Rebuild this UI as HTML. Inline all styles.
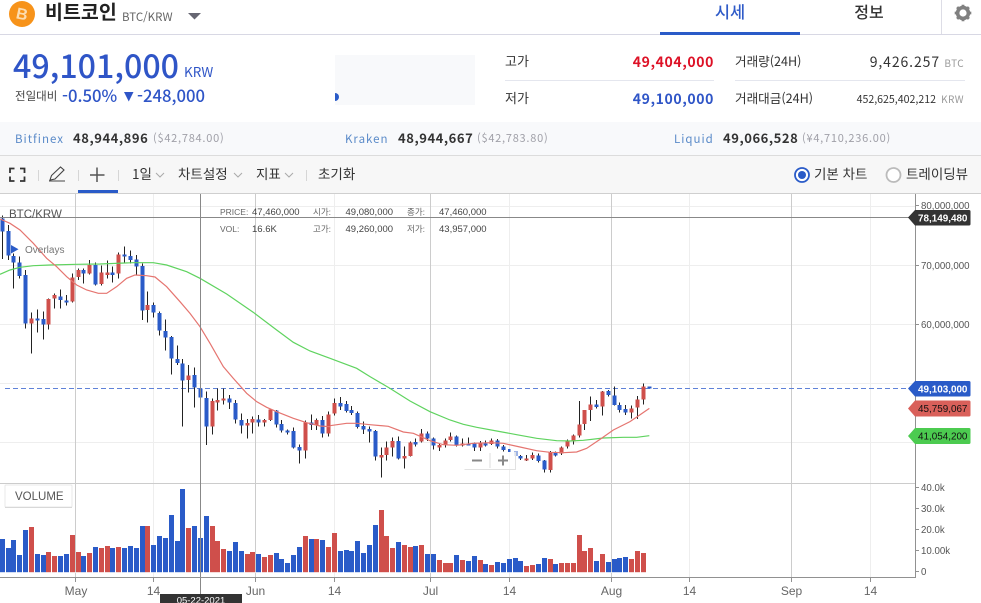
<!DOCTYPE html>
<html lang="ko"><head><meta charset="utf-8"><title>비트코인 BTC/KRW</title>
<style>
html,body{margin:0;padding:0;background:#fff;width:981px;height:603px;overflow:hidden}
svg{display:block}
text{font-family:"Noto Sans CJK KR","Liberation Sans",sans-serif}
.c text,text.c{font-family:"Liberation Sans","Noto Sans CJK KR",sans-serif}
</style></head><body>
<svg width="981" height="603" viewBox="0 0 981 603" xmlns="http://www.w3.org/2000/svg">
<rect width="981" height="603" fill="#fff"/>
<!-- header -->
<circle cx="22" cy="14" r="13" fill="#f7931a"/>
<text class="c" x="22" y="19.500" text-anchor="middle" font-size="16" font-weight="700" fill="#fcdcb0" transform="rotate(12 22 14)">B</text>
<text x="45" y="19" font-size="19.500" font-weight="700" fill="#222">비트코인</text>
<text x="122" y="21" font-size="11.500" fill="#666">BTC/KRW</text>
<path d="M188 13h13l-6.500 6.500z" fill="#666672"/>
<text x="730" y="18" text-anchor="middle" font-size="16.500" font-weight="500" fill="#2f5bc8">시세</text>
<text x="869" y="18" text-anchor="middle" font-size="16" font-weight="500" fill="#333">정보</text>
<path d="M0 34.500H981" stroke="#d8d8e4"/>
<path d="M941.500 0V34" stroke="#dddde6"/>
<rect x="660" y="32" width="140" height="3" fill="#2a5bc8"/>
<circle cx="963" cy="13" r="5.500" fill="none" stroke="#808080" stroke-width="3.400"/>
<path d="M963 4.700V21.300M954.700 13H971.300M957.100 7.100L968.900 18.900M968.900 7.100L957.100 18.900" stroke="#808080" stroke-width="2.800"/>
<circle cx="963" cy="13" r="3.600" fill="#fff"/>
<!-- price -->
<text x="13" y="78" font-size="32.200" font-weight="500" fill="#2f55c7">49,101,000</text>
<text x="184" y="77" font-size="13.500" fill="#2f55c7">KRW</text>
<text x="15" y="100" font-size="11.500" fill="#444">전일대비</text>
<text x="62" y="102" font-size="16.700" font-weight="500" fill="#2f55c7">-0.50%</text>
<path d="M124 92h9.500l-4.750 9.500z" fill="#2f55c7"/>
<text x="137" y="102" font-size="16.700" font-weight="500" fill="#2f55c7">-248,000</text>
<rect x="335" y="55" width="140" height="50" fill="#f8f9fb"/>
<path d="M335 93a4 4 0 0 1 0 8z" fill="#2a5bc8"/>
<!-- stats -->
<text x="505" y="66" font-size="13" fill="#333">고가</text>
<text x="714" y="67" text-anchor="end" font-size="14" font-weight="700" letter-spacing=".6" fill="#dd1126">49,404,000</text>
<path d="M505 80.500H714M735 80.500H965" stroke="#e4e6ee"/>
<text x="505" y="103" font-size="13" fill="#333">저가</text>
<text x="714" y="104" text-anchor="end" font-size="14" font-weight="700" letter-spacing=".6" fill="#2f55c7">49,100,000</text>
<text x="735" y="66" font-size="12.600" fill="#333">거래량(24H)</text>
<text x="940" y="67" text-anchor="end" font-size="14" letter-spacing=".9" fill="#333">9,426.257</text>
<text x="964" y="67" text-anchor="end" font-size="10" letter-spacing=".4" fill="#999">BTC</text>
<text x="735" y="103" font-size="12.600" fill="#333">거래대금(24H)</text>
<text x="936" y="103" text-anchor="end" font-size="10.600" fill="#333">452,625,402,212</text>
<text x="964" y="103" text-anchor="end" font-size="10" letter-spacing=".4" fill="#999">KRW</text>
<!-- exchanges -->
<rect y="122" width="981" height="33" fill="#f8f9fb"/>
<path d="M0 155.500H981" stroke="#dcdcdc"/>
<g font-size="11.500" letter-spacing="1" fill="#5b8bc9">
<text x="15" y="143">Bitfinex</text><text x="345" y="143">Kraken</text><text x="674" y="143">Liquid</text>
</g>
<g font-size="13" font-weight="700" letter-spacing=".55" fill="#333">
<text x="73" y="143">48,944,896</text><text x="398" y="143">48,944,667</text><text x="723" y="143">49,066,528</text>
</g>
<g font-size="11" letter-spacing=".75" fill="#a0a0a8">
<text x="153" y="142">($42,784.00)</text><text x="477" y="142">($42,783.80)</text><text x="802" y="142">(¥4,710,236.00)</text>
</g>
<!-- toolbar -->
<rect y="156" width="981" height="37" fill="#f7f7f7"/>
<path d="M0 193.500H981" stroke="#cfcfcf"/>
<path d="M10 173v-4.500h4.500M20 168.500h4.500V173M24.500 176.500v4.500H20M14.500 181H10v-4.500" fill="none" stroke="#333" stroke-width="1.800"/>
<path d="M38.500 170V181M78.500 170V181M118.500 170V181M306.500 170V181" stroke="#d6d6d6"/>
<path d="M49 181H65M50 180l1.500-4.500 9-8.500 3.500 3-9 9z" fill="none" stroke="#444" stroke-width="1.100"/>
<path d="M90 175H104.500M97 167.500V182" stroke="#555" stroke-width="1.500"/>
<rect x="78" y="190" width="40" height="3" fill="#2a5bc8"/>
<g font-size="13.500" fill="#333">
<text x="132" y="179">1일</text><text x="178" y="179">차트설정</text><text x="256" y="179">지표</text><text x="318" y="179">초기화</text>
<text x="814" y="179">기본 차트</text><text x="906" y="179">트레이딩뷰</text>
</g>
<path d="M156 173l4 4 4-4M234 173l4 4 4-4M285 173l4 4 4-4" fill="none" stroke="#aaa"/>
<circle cx="802" cy="175" r="7" fill="#fff" stroke="#2a5bc8" stroke-width="1.800"/><circle cx="802" cy="175" r="4" fill="#2a5bc8"/>
<circle cx="893.500" cy="175" r="7" fill="#fff" stroke="#bbb" stroke-width="1.800"/>
<!-- grid -->
<path d="M0 206.500H915M0 265.500H915M0 324.500H915M0 383.500H915M0 442.500H915M153.500 194V483M334.500 194V483M509.500 194V483M689.500 194V483M870.500 194V483M153.500 484V577M334.500 484V577M509.500 484V577M689.500 484V577M870.500 484V577" stroke="#eeeeee"/>
<path d="M75.500 194V483M255.500 194V483M430.500 194V483M611.500 194V483M791.500 194V483M75.500 484V577M255.500 484V577M430.500 484V577M611.500 484V577M791.500 484V577" stroke="#cccccc"/>
<path d="M0 483.500H915" stroke="#cccccc"/>
<path d="M5 388.500H915" stroke="#5f82d8" stroke-dasharray="5 3"/>
<!-- candles -->
<g transform="translate(0 195) scale(.33333)" fill="none">
<path shape-rendering="crispEdges" stroke="#222" stroke-width="3" d="M8 62V192M25 90V195M41 175V280M59 185V250M76 225V400M94 352V475M112 344V412M130 350V433M145 310V404M163 296V340M181 283V340M199 300V332M217 236V322M235 220V255M250 220V265M268 195V238M286 202V272M304 212V272M322 197V250M338 215V262M355 172V250M373 155V205M391 167V205M409 180V240M427 205V375M442 290V382M460 322V368M478 350V422M496 373V467M514 423V538M532 452V510M548 492V694M565 510V592M583 518V637M601 578V610M619 590V750M637 610V718M652 580V646M670 580V628M688 600V642M706 615V685M724 655V716M742 672V730M757 665V715M775 660V695M793 672V695M811 640V678M829 645V697M844 675V712M862 703V718M880 698V760M898 748V805M916 677V790M934 658V705M949 670V705M967 663V728M985 650V725"/>
<path shape-rendering="crispEdges" stroke="#2a5bc8" stroke-width="12" d="M8 70V110M25 108V182M41 183V203M59 202V243M76 240V386M112 370V377M130 372V389M181 304V315M199 316V323M250 225V236M286 210V268M338 232V240M373 178V185M391 183V195M409 193V215M427 213V347M460 330V353M478 354V407M496 408V428M514 426V491M532 492V504M548 505V557M583 540V578M601 580V608M619 609V695M688 610V623M706 624V674M724 675V692M775 674V682M829 646V689M844 687V707M862 706V713M880 708V758M898 756V767M934 682V690M967 675V716"/>
<path shape-rendering="crispEdges" stroke="#cf4f4b" stroke-width="12" d="M94 370V386M145 312V389M163 300V311M217 247V320M235 225V246M268 210V236M304 232V267M322 232V240M355 178V236M442 330V345M565 541V555M637 618V695M652 615V623M670 610V617M742 684V692M757 672V683M793 675V683M811 643V675M916 682V767M949 675V690M985 658V716"/>
<polyline stroke="#5fd35f" stroke-width="3.600" points="0,238 30,225 60,217 100,212 150,210 230,208 300,207 400,203 460,203 500,210 560,230 600,250 680,297 760,352 830,405 880,442 930,468 990,490"/>
<polyline stroke="#e57570" stroke-width="3.600" points="0,72 30,85 60,105 100,145 140,190 170,215 200,245 230,270 260,285 295,295 320,295 350,275 380,250 405,240 440,242 465,246 500,275 540,320 570,355 600,395 630,445 670,515 700,550 740,595 770,620 800,637 830,650 880,670 920,683 960,693 990,695"/>
</g>
<g transform="translate(330 195) scale(.33333)" fill="none">
<path shape-rendering="crispEdges" stroke="#222" stroke-width="3" d="M13 610V662M31 606V645M49 618V652M64 633V660M82 650V700M100 680V717M118 695V742M136 705V797M154 757V847M169 740V796M187 728V785M205 725V793M223 755V820M241 740V785M256 730V755M274 702V742M292 710V738M310 728V763M328 745V768M346 730V758M361 713V740M379 722V755M397 730V755M415 727V752M433 742V768M451 738V768M466 737V755M484 730V750M502 732V760M520 750V770M571 780V795M589 780V798M607 772V795M625 775V803M643 795V832M661 768V832M676 770V785M694 755V780M712 733V760M730 718V748M748 618V727M763 645V705M781 605V678M799 615V640M817 588V662M835 585V605M853 575V632M868 622V652M886 630V660M904 632V670M922 603V672M940 565V628"/>
<path shape-rendering="crispEdges" stroke="#2a5bc8" stroke-width="12" d="M31 624V634M49 627V648M64 645V654M82 654V696M100 693V704M118 702V710M136 708V785M205 738V791M256 741V749M292 715V730M310 730V752M379 724V752M415 745V752M433 745V758M466 745V752M502 736V755M520 754V765M571 783V791M625 781V798M643 796V824M676 774V781M799 628V636M835 588V600M853 601V630M868 630V645M886 642V653M958 574V580"/>
<path shape-rendering="crispEdges" stroke="#cf4f4b" stroke-width="12" d="M13 624V655M154 780V788M169 757V780M187 738V758M223 783V791M241 742V783M274 715V740M328 750V757M346 736V750M361 724V735M397 745V752M451 744V758M484 736V747M589 790V796M607 780V791M661 772V825M694 757V776M712 740V755M730 721V739M748 688V722M763 645V687M781 628V645M817 589V635M904 640V653M922 613V638M940 574V614"/>
<polyline stroke="#5fd35f" stroke-width="3.600" points="0,490 40,505 80,520 120,545 180,580 240,618 300,650 360,675 400,688 440,697 500,708 560,719 620,730 680,737 720,738 760,736 820,729 880,727 920,727 958,722"/>
<polyline stroke="#e57570" stroke-width="3.600" points="0,692 50,685 80,685 120,689 175,694 220,711 250,715 300,737 340,749 380,751 430,745 480,743 520,745 570,756 620,767 660,772 700,773 740,771 770,760 810,733 850,705 900,680 958,640"/>
</g>
<!-- faded candles behind zoom control -->
<rect x="508" y="449" width="2.500" height="3" fill="#2a5bc8"/>
<rect x="514" y="451" width="4" height="5" fill="#2a5bc8" fill-opacity=".45"/>
<!-- zoom control -->
<rect x="464.500" y="452" width="51" height="17" rx="1" fill="#fff" fill-opacity=".72"/>
<path d="M464.500 469.500H515.500V452" fill="none" stroke="#e2e2e2"/>
<path d="M490 453V468" stroke="#ddd"/>
<path d="M472 460.500H482M498 460.500H508M503 455.500V465.500" stroke="#888" stroke-width="2"/>
<!-- volume bars -->
<g transform="translate(0 480) scale(.33333)" fill="none" stroke-width="15" shape-rendering="crispEdges">
<path stroke="#2a5bc8" d="M8 177V277M25 204V277M41 180V277M59 225V277M76 150V277M112 222V277M130 225V277M181 228V277M199 222V277M250 228V277M286 201V277M338 204V277M373 204V277M391 198V277M409 204V277M427 138V277M460 195V277M478 168V277M496 174V277M514 105V277M532 183V277M548 27V277M583 138V277M601 174V277M619 108V277M688 213V277M706 186V277M724 213V277M775 222V277M829 219V277M844 237V277M862 249V277M880 225V277M898 201V277M934 177V277M967 180V277"/>
<path stroke="#cf4f4b" d="M94 141V277M145 216V277M163 228V277M217 165V277M235 216V277M268 219V277M304 204V277M322 198V277M355 201V277M442 138V277M565 144V277M637 138V277M652 183V277M670 207V277M742 222V277M757 216V277M793 231V277M811 225V277M916 168V277M949 177V277M985 201V277"/>
</g>
<g transform="translate(330 480) scale(.33333)" fill="none" stroke-width="15" shape-rendering="crispEdges">
<path stroke="#2a5bc8" d="M31 213V277M49 210V277M64 213V277M82 183V277M100 219V277M118 195V277M136 135V277M205 186V277M256 198V277M292 222V277M310 222V277M379 225V277M415 243V277M433 228V277M466 252V277M502 246V277M520 249V277M538 237V277M556 234V277M571 243V277M625 252V277M643 234V277M676 252V277M799 243V277M835 246V277M853 237V277M868 234V277M886 231V277"/>
<path stroke="#cf4f4b" d="M13 159V277M154 90V277M169 168V277M187 204V277M223 195V277M241 201V277M274 195V277M328 240V277M346 249V277M361 249V277M397 240V277M451 240V277M484 255V277M589 258V277M607 255V277M661 237V277M694 249V277M712 249V277M730 249V277M748 165V277M763 213V277M781 204V277M817 222V277M904 237V277M922 213V277M940 219V277"/>
</g>
<path d="M0 572.500H650" stroke="#fff" stroke-opacity=".6"/>
<!-- crosshair -->
<path d="M0 217.500H915M200.500 194V603" stroke="#888"/>
<!-- axes -->
<path d="M0 577.500H916M915.500 194V578" stroke="#919191"/>
<path d="M75.500 578V582M153.500 578V582M255.500 578V582M334.500 578V582M430.500 578V582M509.500 578V582M611.500 578V582M689.500 578V582M791.500 578V582M870.500 578V582M916 205.500H919M916 265.500H919M916 324.500H919M916 487.500H919M916 508.500H919M916 529.500H919M916 550.500H919M916 571.500H919" stroke="#919191"/>
<g class="c" font-size="9.700" fill="#555">
<text x="921" y="209">80,000,000</text><text x="921" y="269">70,000,000</text><text x="921" y="328">60,000,000</text>
<text x="921" y="491">40.0k</text><text x="921" y="512">30.0k</text><text x="921" y="533">20.0k</text><text x="921" y="554">10.00k</text><text x="921" y="575">0</text>
</g>
<g class="c" font-size="12" fill="#666" text-anchor="middle">
<text x="76" y="595">May</text><text x="153.500" y="595">14</text><text x="255.500" y="595">Jun</text><text x="334.500" y="595">14</text><text x="430.500" y="595">Jul</text><text x="509.500" y="595">14</text><text x="611.500" y="595">Aug</text><text x="689.500" y="595">14</text><text x="791.500" y="595">Sep</text><text x="870.500" y="595">14</text>
</g>
<rect x="160" y="594" width="82" height="9" fill="#333"/>
<text class="c" x="201" y="603.500" text-anchor="middle" font-size="9.500" fill="#fff">05-22-2021</text>
<!-- price tags -->
<path d="M908 217.500l7-7.500h54a1.500 1.500 0 0 1 1.500 1.500v12.500a1.500 1.500 0 0 1-1.500 1.500h-54z" fill="#333"/>
<path d="M908 388.500l7-7.500h54a1.500 1.500 0 0 1 1.500 1.500v12.500a1.500 1.500 0 0 1-1.500 1.500h-54z" fill="#2a5bc8"/>
<path d="M908 408.500l7-8h54a1.500 1.500 0 0 1 1.500 1.500v13a1.500 1.500 0 0 1-1.500 1.500h-54z" fill="#d9605a"/>
<path d="M908 436l7-8h54a1.500 1.500 0 0 1 1.500 1.500v13a1.500 1.500 0 0 1-1.500 1.500h-54z" fill="#4ccb50"/>
<g class="c" font-size="9.900">
<text x="918" y="221.500" fill="#fff" font-weight="700">78,149,480</text>
<text x="918" y="392.500" fill="#fff" font-weight="700">49,103,000</text>
<text x="918" y="412" fill="#111">45,759,067</text>
<text x="918" y="439.500" fill="#111">41,054,200</text>
</g>
<!-- legend -->
<text class="c" x="9" y="218" font-size="11.500" fill="#555">BTC/KRW</text>
<path d="M11 245l7.500 4.200-7.500 4.300z" fill="#2a5bc8"/>
<text class="c" x="25" y="253" font-size="10" fill="#777">Overlays</text>
<g font-size="8.500" fill="#666" class="c">
<text x="220" y="215">PRICE:</text><text x="252" y="215" font-size="9.500" fill="#444">47,460,000</text>
<text x="313" y="215">시가:</text><text x="345.500" y="215" font-size="9.500" fill="#444">49,080,000</text>
<text x="407" y="215">종가:</text><text x="439" y="215" font-size="9.500" fill="#444">47,460,000</text>
<text x="220" y="232">VOL:</text><text x="252" y="232" font-size="9.500" fill="#444">16.6K</text>
<text x="313" y="232">고가:</text><text x="345.500" y="232" font-size="9.500" fill="#444">49,260,000</text>
<text x="407" y="232">저가:</text><text x="439" y="232" font-size="9.500" fill="#444">43,957,000</text>
</g>
<!-- volume label -->
<rect x="5" y="485" width="67" height="22" rx="1" fill="#fff" stroke="#e8e8e8"/>
<path d="M5 507.500H72" stroke="#d8d8d8"/>
<text class="c" x="15" y="500" font-size="11.500" fill="#555">VOLUME</text>
</svg>
</body></html>
